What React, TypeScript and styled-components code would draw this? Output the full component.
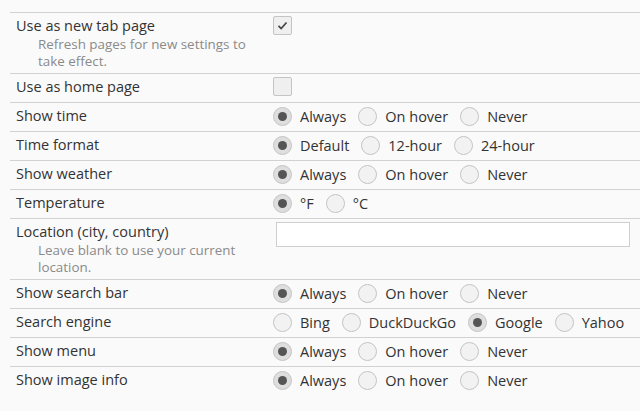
import React from "react";
import styled, { createGlobalStyle } from "styled-components";

const GlobalStyle = createGlobalStyle`
  html, body {
    margin: 0;
    padding: 0;
    background: #fafafa;
  }
  body {
    font-family: "Open Sans", "Noto Sans", sans-serif;
    color: #333;
  }
`;

type Option = { label: string; checked?: boolean };

type Setting =
  | { kind: "check"; label: string; checked: boolean; description?: string }
  | { kind: "radio"; label: string; options: Option[] }
  | { kind: "text"; label: string; description?: string };

const visibility = (checked = 0): Option[] =>
  ["Always", "On hover", "Never"].map((label, i) => ({ label, checked: i === checked }));

const settings: Setting[] = [
  {
    kind: "check",
    label: "Use as new tab page",
    checked: true,
    description: "Refresh pages for new settings to take effect.",
  },
  { kind: "check", label: "Use as home page", checked: false },
  { kind: "radio", label: "Show time", options: visibility() },
  {
    kind: "radio",
    label: "Time format",
    options: [{ label: "Default", checked: true }, { label: "12-hour" }, { label: "24-hour" }],
  },
  { kind: "radio", label: "Show weather", options: visibility() },
  {
    kind: "radio",
    label: "Temperature",
    options: [{ label: "°F", checked: true }, { label: "°C" }],
  },
  {
    kind: "text",
    label: "Location (city, country)",
    description: "Leave blank to use your current location.",
  },
  { kind: "radio", label: "Show search bar", options: visibility() },
  {
    kind: "radio",
    label: "Search engine",
    options: [
      { label: "Bing" },
      { label: "DuckDuckGo" },
      { label: "Google", checked: true },
      { label: "Yahoo" },
    ],
  },
  { kind: "radio", label: "Show menu", options: visibility() },
  { kind: "radio", label: "Show image info", options: visibility() },
];

const Page = styled.div`
  padding: 12px 0 0 10px;
`;

const Table = styled.div`
  display: flex;
  flex-direction: column;
`;

const Row = styled.div`
  display: grid;
  grid-template-columns: 263px 1fr;
  border-top: 1px solid #d2d2d2;
`;

const LabelCell = styled.div`
  padding: 4px 6px 6px;
`;

const Label = styled.div`
  font-size: 14.5px;
  line-height: 18px;
`;

const Description = styled.div`
  font-size: 13.4px;
  line-height: 17px;
  color: #8a8a8a;
  padding: 1px 8px 0 22px;
  margin-bottom: -3px;
`;

const ControlCell = styled.div`
  display: flex;
  align-items: flex-start;
  padding: 4px 0;
`;

const Group = styled.div`
  display: flex;
  align-items: center;
  height: 19px;
`;

const Choice = styled.label`
  display: flex;
  align-items: center;
  font-size: 14.5px;
  line-height: 18px;
  margin-right: 12px;
`;

const RadioMark = styled.span<{ $checked?: boolean }>`
  box-sizing: border-box;
  width: 19px;
  height: 19px;
  border-radius: 50%;
  border: 1px solid #c4c4c4;
  background: ${(p) => (p.$checked ? "#dedede" : "#f2f2f2")};
  margin-right: 8px;
  display: flex;
  align-items: center;
  justify-content: center;

  &::after {
    content: "";
    display: ${(p) => (p.$checked ? "block" : "none")};
    width: 9px;
    height: 9px;
    border-radius: 50%;
    background: #555;
  }
`;

const CheckBox = styled.span`
  box-sizing: border-box;
  width: 19px;
  height: 19px;
  margin-top: -1px;
  border: 1px solid #c4c4c4;
  border-radius: 2px;
  background: #efefef;
  display: flex;
  align-items: center;
  justify-content: center;
`;

const TextInput = styled.div`
  box-sizing: border-box;
  margin: -1px 0 0 3px;
  width: 354px;
  height: 25px;
  border: 1px solid #cfcfcf;
  background: #fff;
`;

const Check = () => (
  <svg width="11" height="9" viewBox="0 0 11 9">
    <path d="M1.5 4.8 L4.2 7.5 L9.5 1.5" fill="none" stroke="#444" strokeWidth="1.7" />
  </svg>
);

const Control = ({ setting }: { setting: Setting }) => {
  if (setting.kind === "check") {
    return <CheckBox>{setting.checked && <Check />}</CheckBox>;
  }
  if (setting.kind === "text") {
    return <TextInput />;
  }
  return (
    <Group>
      {setting.options.map((o) => (
        <Choice key={o.label}>
          <RadioMark $checked={o.checked} />
          {o.label}
        </Choice>
      ))}
    </Group>
  );
};

export default function App() {
  return (
    <Page>
      <GlobalStyle />
      <Table>
        {settings.map((s) => (
          <Row key={s.label}>
            <LabelCell>
              <Label>{s.label}</Label>
              {"description" in s && s.description && <Description>{s.description}</Description>}
            </LabelCell>
            <ControlCell>
              <Control setting={s} />
            </ControlCell>
          </Row>
        ))}
      </Table>
    </Page>
  );
}
